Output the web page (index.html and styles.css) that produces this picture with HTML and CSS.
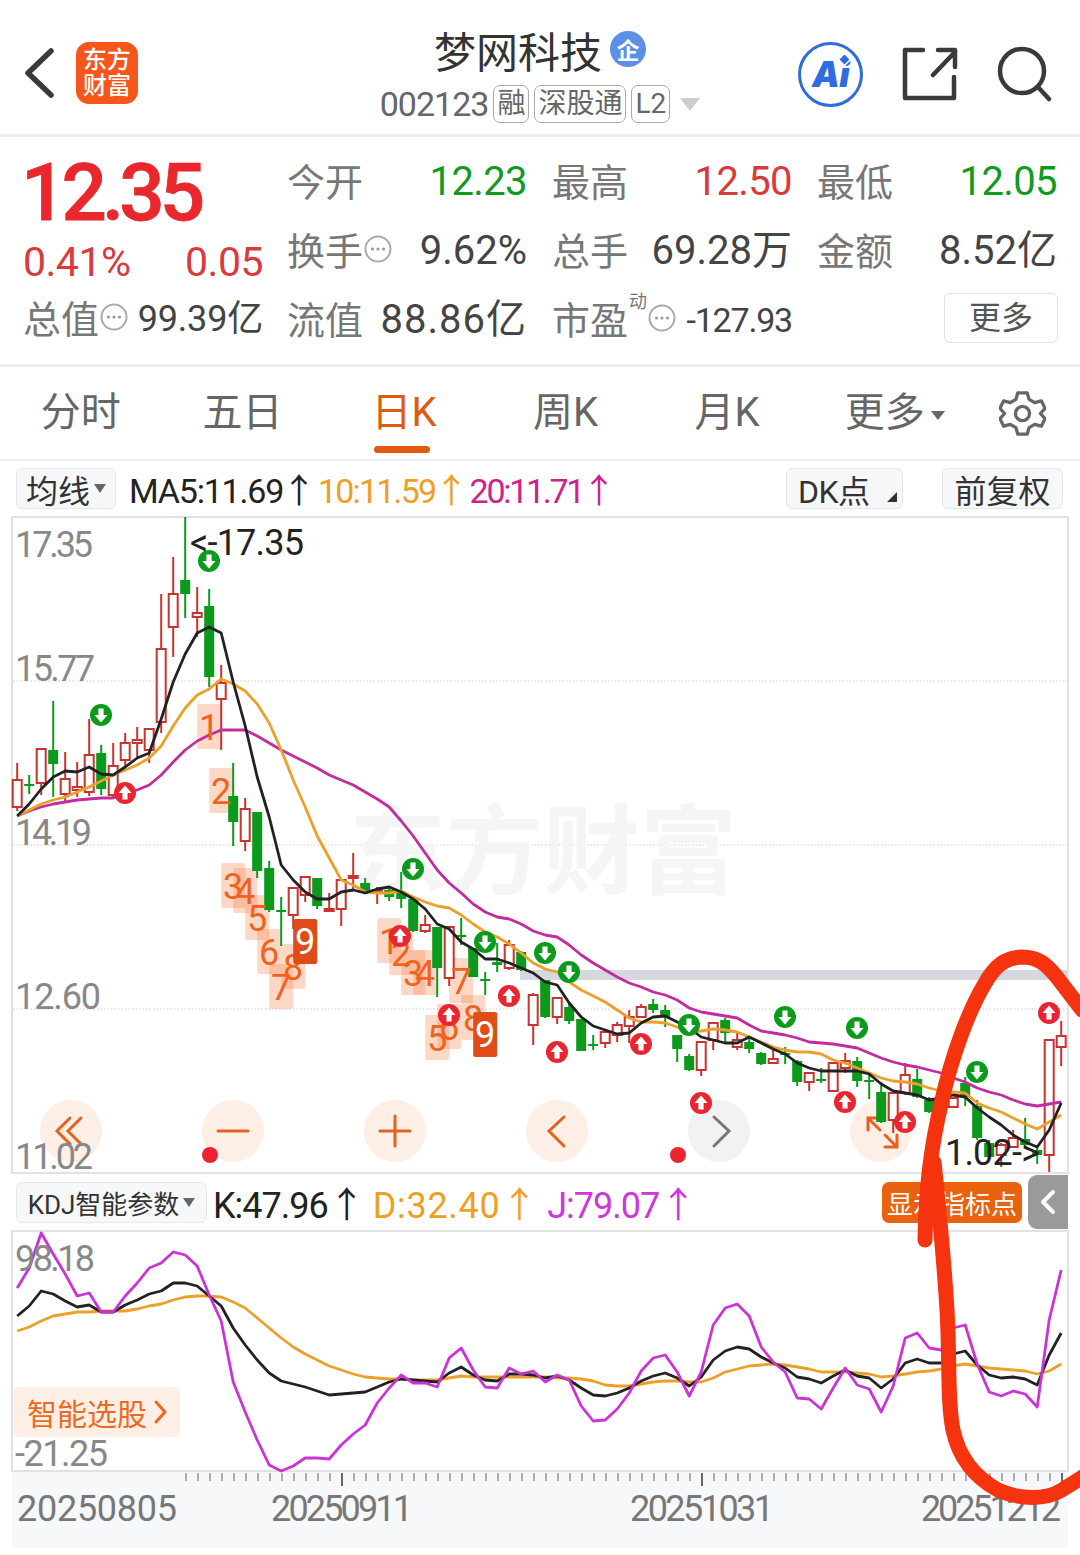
FILE: index.html
```html
<!DOCTYPE html>
<html lang="zh-CN">
<head>
    <meta charset="UTF-8">
    <meta name="viewport" content="width=device-width, initial-scale=1.0">
    <title>梦网科技 002123</title>
    <link rel="stylesheet" href="styles.css">
</head>
<body>
    <svg class="defs" width="0" height="0">
        <symbol id="dots" viewBox="0 0 28 28">
            <circle cx="14" cy="14" r="12.5" fill="none" stroke="#aaa" stroke-width="2"/>
            <circle cx="8.5" cy="14" r="1.6" fill="#999"/>
            <circle cx="14" cy="14" r="1.6" fill="#999"/>
            <circle cx="19.5" cy="14" r="1.6" fill="#999"/>
        </symbol>
    </svg>
    <div class="page">
        <header class="topbar">
            <div class="topbar-left">
                <svg class="back" width="32" height="50" viewBox="0 0 32 50"><path d="M28 3 L5 25 L28 47" fill="none" stroke="#3a3a3a" stroke-width="5.5" stroke-linecap="round" stroke-linejoin="round"/></svg>
                <div class="logo"><span>东方</span><span>财富</span></div>
            </div>
            <div class="topbar-mid">
                <div class="title-row">
                    <span class="title">梦网科技</span>
                    <span class="ent">企</span>
                </div>
                <div class="code-row">
                    <span class="code">002123</span>
                    <span class="tag">融</span>
                    <span class="tag">深股通</span>
                    <span class="tag">L2</span>
                    <span class="caret"></span>
                </div>
            </div>
            <div class="topbar-right">
                <div class="ai">
                    <span>Ai</span>
                    <i class="ai-star"></i>
                </div>
                <svg width="56" height="54" viewBox="0 0 56 54"><path d="M21 3 H3 V51 H52 V30 M31 28 L53 5 M36 3 H53 V20" fill="none" stroke="#3a3a3a" stroke-width="4.5" stroke-linejoin="round" stroke-linecap="round"/></svg>
                <svg width="56" height="56" viewBox="0 0 56 56"><circle cx="25" cy="25" r="22" fill="none" stroke="#3a3a3a" stroke-width="4.5"/><path d="M41 41 L52 53" stroke="#3a3a3a" stroke-width="4.5" stroke-linecap="round"/></svg>
            </div>
        </header>

        <section class="quote">
            <div class="quote-left">
                <div class="price">12.35</div>
                <div class="change"><span>0.41%</span><span>0.05</span></div>
                <div class="stat"><span class="label">总值<svg class="info"><use href="#dots"/></svg></span><span class="val mini">99.39亿</span></div>
            </div>
            <div class="quote-grid">
                <div class="stat"><span class="label">今开</span><span class="val tight green">12.23</span></div>
                <div class="stat"><span class="label">最高</span><span class="val tight red">12.50</span></div>
                <div class="stat"><span class="label">最低</span><span class="val tight green">12.05</span></div>
                <div class="stat"><span class="label">换手<svg class="info"><use href="#dots"/></svg></span><span class="val">9.62%</span></div>
                <div class="stat"><span class="label">总手</span><span class="val">69.28万</span></div>
                <div class="stat"><span class="label">金额</span><span class="val">8.52亿</span></div>
                <div class="stat"><span class="label">流值</span><span class="val wide">88.86亿</span></div>
                <div class="stat"><span class="label">市盈<sup>动</sup><svg class="info"><use href="#dots"/></svg></span><span class="val small">-127.93</span></div>
                <div class="stat end"><button class="more">更多</button></div>
            </div>
        </section>

        <nav class="tabs">
            <a class="tab">分时</a>
            <a class="tab">五日</a>
            <a class="tab active">日K</a>
            <a class="tab">周K</a>
            <a class="tab">月K</a>
            <a class="tab tab-more">更多<i class="tab-caret"></i></a>
            <div class="gear">
                <svg width="47" height="47" viewBox="0 0 50 50"><path d="M20 3 H30 L32 10 L38 13.5 L45 11.5 L49 19.5 L44 25 L49 30.5 L45 38.5 L38 36.5 L32 40 L30 47 H20 L18 40 L12 36.5 L5 38.5 L1 30.5 L6 25 L1 19.5 L5 11.5 L12 13.5 L18 10 Z" fill="none" stroke="#666" stroke-width="3.5" stroke-linejoin="round"/><circle cx="25" cy="25" r="7.5" fill="none" stroke="#666" stroke-width="3.5"/></svg>
            </div>
        </nav>

        <div class="legend">
            <button class="pill pill-ma">均线<i class="pill-caret"></i></button>
            <span class="ma black">MA5:11.69<b>↑</b></span>
            <span class="ma orange">10:11.59<b>↑</b></span>
            <span class="ma pink">20:11.71<b>↑</b></span>
            <button class="pill pill-dk">DK点<i class="corner"></i></button>
            <button class="pill pill-fq">前复权</button>
        </div>

        <div class="chart chart-main"><svg id="mainChart" width="1054" height="654" viewBox="13 518 1054 654"></svg></div>

        <div class="legend legend-kdj">
            <button class="pill pill-kdj">KDJ智能参数<i class="pill-caret"></i></button>
            <span class="ma kdj black">K:47.96<b>↑</b></span>
            <span class="ma kdj orange">D:32.40<b>↑</b></span>
            <span class="ma kdj violet">J:79.07<b>↑</b></span>
            <button class="show-points">显示指标点</button>
            <button class="side-tab"><svg width="16" height="26" viewBox="0 0 16 26"><path d="M13 3 L3 13 L13 23" fill="none" stroke="#fff" stroke-width="4" stroke-linecap="round" stroke-linejoin="round"/></svg></button>
        </div>

        <div class="chart chart-kdj">
            <svg id="kdjChart" width="1054" height="238" viewBox="13 1232 1054 238"></svg>
            <div class="picker">智能选股<svg width="15" height="26" viewBox="0 0 15 26"><path d="M3 3 L12 13 L3 23" fill="none" stroke="#ea6a20" stroke-width="3" stroke-linecap="round" stroke-linejoin="round"/></svg></div>
        </div>

        <div class="axis"><svg id="axis" width="1056" height="76" viewBox="12 1472 1056 76"></svg></div>

        <!-- red marker the screenshot's owner drew over the chart -->
        <svg class="scribble" width="1080" height="1555" viewBox="0 0 1080 1555">
            <path d="M925 1240 C926 1190 930 1150 942 1100 C952 1056 968 1012 984 985 C995 965 1005 958 1022 957 C1038 957 1046 964 1056 976 L1082 1010" />
            <path d="M934 1162 C938 1200 944 1260 947 1310 C950 1360 947 1400 953 1430 C959 1458 976 1478 998 1490 C1020 1500 1046 1500 1062 1490 L1084 1476" />
        </svg>
    </div>
    <script src="chart.js"></script>
</body>
</html>
```

FILE: styles.css
```css
* {
    box-sizing: border-box;
}
body {
    margin: 0;
    background: #fff;
    font-family: Roboto, "Noto Sans CJK SC", sans-serif;
    color: #444;
}
button {
    font-family: inherit;
    cursor: pointer;
}
.defs {
    display: block;
    height: 0;
}
.page {
    position: relative;
    width: 1080px;
    height: 1555px;
    overflow: hidden;
}

/* top bar */
.topbar {
    display: grid;
    grid-template-columns: 300px 480px 300px;
    height: 137px;
    border-bottom: 3px solid #eee;
}
.topbar-left {
    display: flex;
    align-items: center;
    gap: 21px;
    padding: 12px 0 0 23px;
    height: 134px;
    align-self: start;
}
.logo {
    display: flex;
    flex-direction: column;
    align-items: center;
    justify-content: center;
    width: 62px;
    height: 62px;
    border-radius: 13px;
    background: #f6561a;
    color: #fff;
    font-size: 24px;
    line-height: 26px;
    font-weight: 500;
}
.topbar-mid {
    display: flex;
    flex-direction: column;
    align-items: center;
    padding-top: 23px;
}
.title-row {
    display: flex;
    align-items: center;
    gap: 8px;
    height: 52px;
}
.title {
    font-size: 42px;
    color: #333;
}
.ent {
    display: flex;
    align-items: center;
    justify-content: center;
    width: 36px;
    height: 36px;
    border-radius: 50%;
    background: #5b90e6;
    color: #fff;
    font-size: 23px;
    font-weight: 700;
}
.code-row {
    display: flex;
    align-items: center;
    gap: 5px;
    height: 40px;
    margin-top: 9px;
}
.code {
    font-size: 34px;
    color: #666;
    letter-spacing: -1px;
}
.tag {
    padding: 0 3px;
    border: 1.5px solid #aaa;
    border-radius: 7px;
    font-size: 28px;
    line-height: 36px;
    color: #666;
}
.caret {
    width: 0;
    height: 0;
    margin-left: 5px;
    border: 10px solid transparent;
    border-top: 13px solid #ccc;
    border-bottom: 0;
}
.topbar-right {
    display: flex;
    align-items: center;
    justify-content: flex-end;
    gap: 39px;
    padding: 14px 27px 0 0;
    height: 134px;
}
.ai {
    position: relative;
    display: flex;
    align-items: center;
    justify-content: center;
    width: 65px;
    height: 65px;
    border: 3.5px solid #2f6ce0;
    border-radius: 50%;
    color: #2f6ce0;
    font-family: Inter, Roboto, sans-serif;
    font-size: 35px;
    font-weight: 900;
    font-style: italic;
    letter-spacing: -0.5px;
}
.ai-star {
    position: absolute;
    top: 11px;
    right: 12px;
    width: 7px;
    height: 7px;
    background: #2f6ce0;
    box-shadow: 0 0 0 1.5px #fff;
    transform: rotate(45deg);
}

/* quote block */
.quote {
    display: flex;
    height: 230px;
    padding: 10px 23px 0;
    border-bottom: 3px solid #eee;
}
.quote-left {
    width: 241px;
    margin-right: 24px;
}
.price {
    height: 90px;
    margin-left: -2px;
    font-size: 80px;
    line-height: 92px;
    font-weight: 500;
    color: #e8282d;
    letter-spacing: -5px;
    -webkit-text-stroke: 0.8px #e8282d;
}
.change {
    display: flex;
    justify-content: space-between;
    height: 50px;
    font-size: 41px;
    line-height: 50px;
    color: #d93a3a;
    letter-spacing: -0.5px;
}
.quote-left .stat {
    height: 69px;
    margin-top: -3px;
}
.quote-grid {
    display: grid;
    grid-template-columns: repeat(3, 240px);
    grid-auto-rows: 69px;
    column-gap: 25px;
}
.stat {
    display: flex;
    align-items: center;
    justify-content: space-between;
}
.stat.end {
    justify-content: flex-end;
}
.label {
    display: flex;
    align-items: center;
    padding-bottom: 4px;
    font-size: 38px;
    color: #777;
}
.label sup {
    align-self: flex-start;
    margin-top: 2px;
    font-size: 18px;
    line-height: 20px;
    margin-left: 1px;
}
.info {
    width: 28px;
    height: 28px;
    margin-left: 1px;
}
.val {
    font-size: 40px;
    line-height: 46px;
    color: #444;
    white-space: nowrap;
}
.val.tight {
    letter-spacing: -0.6px;
}
.val.wide {
    letter-spacing: 1px;
}
.val.mini {
    font-size: 36px;
    letter-spacing: -0.2px;
}
.val.small {
    font-size: 34px;
    letter-spacing: -1.2px;
}
.val.green {
    color: #109a1e;
}
.val.red {
    color: #d93a3a;
}
.more {
    width: 114px;
    height: 50px;
    margin: 0 -1px 4px 0;
    border: 1.5px solid #e2e2e2;
    border-radius: 6px;
    background: #fff;
    color: #555;
    font-size: 32px;
    line-height: 44px;
}

/* period tabs */
.tabs {
    display: flex;
    height: 94px;
    border-bottom: 2px solid #eee;
}
.tab {
    position: relative;
    width: 161.6px;
    text-align: center;
    font-size: 40px;
    line-height: 92px;
    color: #666;
}
.tab.active {
    color: #e05a10;
}
.tab.active::after {
    content: "";
    position: absolute;
    left: 51px;
    bottom: 6px;
    width: 56px;
    height: 7px;
    border-radius: 4px;
    background: #e05a10;
}
.tab-more {
    padding-left: 12px;
    white-space: nowrap;
}
.tab-caret {
    display: inline-block;
    width: 0;
    height: 0;
    margin-left: 6px;
    vertical-align: 6px;
    border: 7px solid transparent;
    border-top: 9px solid #666;
    border-bottom: 0;
}
.gear {
    display: flex;
    align-items: center;
    justify-content: center;
    width: 106px;
}

/* legend rows */
.legend {
    display: flex;
    align-items: center;
    height: 55px;
    padding-left: 16px;
}
.pill {
    display: flex;
    align-items: center;
    justify-content: center;
    height: 41px;
    padding: 0;
    border: 1.5px solid #e6e8ec;
    border-radius: 6px;
    background: #f6f7f9;
    color: #333;
    font-size: 32px;
}
.pill-ma {
    width: 100px;
    margin-right: 13px;
}
.pill-dk {
    position: relative;
    width: 117px;
    margin-left: auto;
    margin-right: 39px;
    letter-spacing: -0.5px;
    justify-content: flex-start;
    padding-left: 11px;
}
.pill-fq {
    width: 121px;
    margin-right: 17px;
}
.pill-kdj {
    width: 191px;
    margin-right: 6px;
    font-size: 26px;
}
.pill-caret {
    width: 0;
    height: 0;
    margin-left: 4px;
    border: 6px solid transparent;
    border-top: 9px solid #666;
    border-bottom: 0;
}
.corner {
    position: absolute;
    right: 5px;
    bottom: 6px;
    width: 0;
    height: 0;
    border-left: 10px solid transparent;
    border-bottom: 10px solid #333;
}
.ma {
    margin-right: 3px;
    font-size: 34px;
    letter-spacing: -1.2px;
    white-space: nowrap;
}
.ma b {
    font-weight: 400;
    margin-left: -1px;
}
.ma.orange {
    letter-spacing: -1.8px;
}
.ma.pink {
    letter-spacing: -2.3px;
}
.ma.kdj {
    font-size: 36px;
    margin-right: 9px;
    letter-spacing: -1px;
}
.ma.kdj.orange {
    letter-spacing: 0.7px;
}
.ma.kdj b {
    margin-left: 1px;
}
.black {
    color: #222;
}
.orange {
    color: #ee9f24;
}
.pink {
    color: #d1208c;
}
.violet {
    color: #cf36e0;
}
.legend-kdj {
    position: relative;
    height: 56px;
}
.show-points {
    width: 140px;
    height: 41px;
    margin-left: auto;
    margin-right: 6px;
    padding: 0;
    border: 0;
    border-radius: 7px;
    background: #e8620f;
    color: #fff;
    font-size: 26px;
    white-space: nowrap;
}
.side-tab {
    display: flex;
    align-items: center;
    justify-content: center;
    width: 40px;
    height: 54px;
    margin-right: 12px;
    padding: 0;
    border: 0;
    border-radius: 9px 0 0 9px;
    background: #9a9a9a;
}

/* charts */
.chart {
    position: relative;
    margin: 0 11px;
    border: 2px solid #e2e2e2;
}
.chart svg {
    display: block;
    overflow: visible;
}
.chart-main {
    height: 658px;
}
.chart-kdj {
    height: 242px;
}
.picker {
    position: absolute;
    left: 0;
    top: 155px;
    display: flex;
    align-items: center;
    gap: 6px;
    width: 167px;
    height: 50px;
    padding-left: 14px;
    border-radius: 6px;
    background: #fdeee6;
    color: #ea6a20;
    font-size: 30px;
}
.axis {
    height: 76px;
    margin: 0 12px;
    background: #f7f8fa;
}
.axis svg {
    display: block;
    overflow: visible;
}
.scribble {
    position: absolute;
    top: 0;
    left: 0;
}
.scribble path {
    fill: none;
    stroke: #f5330f;
    stroke-width: 15;
    stroke-linecap: round;
    stroke-linejoin: round;
}

/* chart drawing */
.axis-label {
    font-size: 36px;
    fill: #888;
}
.extreme {
    font-size: 36px;
    fill: #222;
    letter-spacing: -0.8px;
}
.axis-date {
    font-size: 36px;
    fill: #777;
}
.watermark {
    font-size: 97px;
    font-weight: 700;
    fill: #f5f5f6;
    font-family: "Noto Sans CJK SC", sans-serif;
}
.seq {
    font-size: 36px;
    fill: #ec6420;
    text-anchor: middle;
}
.seq.last {
    fill: #fff;
}
```

FILE: chart.js
```js
// candles: [dir, wickTop, bodyTop, bodyBottom, wickBottom], dir 1 = up (red, hollow)
const candles = [
    [1,763,780,807,811],[0,775,784,785,794],[1,749,749,783,795],[0,701,750,764,797],
    [1,752,779,794,802],[1,762,787,790,797],[1,719,755,792,796],[0,745,753,789,795],
    [1,743,766,795,799],[1,733,743,760,767],[1,727,740,743,757],[1,729,729,750,763],
    [1,594,649,722,733],[1,557,594,627,657],[0,517,580,594,618],[1,587,613,617,637],
    [0,589,606,677,687],[1,665,683,699,750],[0,763,796,822,846],[1,798,809,841,851],
    [0,812,812,871,878],[0,861,868,910,912],[0,897,910,912,946],[1,888,888,915,929],
    [1,877,877,895,902],[0,878,878,906,909],[1,893,909,910,911],[1,880,880,909,926],
    [1,853,876,878,890],[0,878,883,892,893],[1,887,890,891,904],[0,887,890,897,901],
    [0,872,892,899,908],[0,897,899,931,932],[1,915,925,931,933],[0,927,927,968,997],
    [1,927,927,978,986],[0,918,935,937,945],[0,948,948,977,977],[0,972,979,981,995],
    [0,943,962,965,972],[1,940,945,968,970],[0,951,952,970,971],[1,993,995,1025,1045],
    [0,980,980,1017,1018],[1,997,998,1017,1024],[0,1002,1007,1021,1024],[0,1019,1019,1051,1051],
    [0,1035,1044,1045,1050],[1,1030,1032,1043,1048],[1,1022,1025,1035,1042],[1,1010,1017,1026,1043],
    [1,1004,1007,1017,1018],[0,999,1004,1010,1013],[0,1005,1010,1017,1027],[0,1035,1035,1049,1062],
    [0,1054,1056,1070,1071],[1,1042,1042,1070,1076],[1,1022,1023,1040,1050],[0,1018,1020,1033,1042],
    [1,1032,1040,1047,1050],[0,1039,1042,1049,1053],[0,1052,1053,1064,1065],[1,1048,1059,1063,1064],
    [0,1047,1053,1055,1064],[0,1060,1061,1082,1086],[1,1073,1073,1082,1091],[0,1068,1079,1081,1083],
    [1,1063,1063,1091,1092],[1,1053,1061,1068,1073],[0,1057,1061,1081,1087],[0,1075,1080,1082,1099],
    [0,1082,1092,1122,1123],[1,1093,1093,1120,1133],[1,1063,1075,1093,1095],[0,1069,1079,1097,1098],
    [0,1097,1100,1112,1113],[1,1103,1107,1113,1117],[1,1097,1098,1107,1108],[0,1077,1083,1097,1106],
    [0,1100,1106,1138,1140],[0,1140,1143,1157,1158],[1,1143,1145,1155,1167],[1,1130,1138,1147,1148],
    [0,1118,1139,1145,1148],[0,1148,1150,1155,1164],[1,1040,1040,1155,1172],[1,1021,1036,1047,1066]
];

// x of each candle is fixed, so the averages only list y
const ma5 = [816,804,789,777,771,772,767,774,775,767,758,753,719,682,654,633,627,633,682,726,777,817,865,880,892,899,899,892,890,893,889,887,892,899,909,924,929,942,949,959,959,963,968,973,
    982,985,1003,1017,1026,1030,1034,1033,1023,1017,1016,1022,1028,1037,1040,1043,1043,1037,1043,1049,1054,1063,1068,1071,1071,1071,1071,1074,1084,1091,1093,1095,1100,1098,1095,1097,1108,1117,1125,1135,1142,1147,1130,1103];
const ma10 = [816,810,804,800,797,792,787,781,775,770,765,758,746,726,708,695,689,679,684,691,704,723,750,780,807,836,858,880,885,892,893,893,891,897,902,906,908,915,924,932,937,944,953,963,
    969,972,982,990,996,1002,1010,1018,1022,1022,1023,1027,1032,1031,1029,1030,1032,1037,1042,1047,1050,1052,1052,1054,1060,1063,1068,1073,1078,1081,1082,1084,1088,1091,1092,1093,1103,1108,1112,1118,1124,1129,1122,1115];
const ma20 = [816,811,807,804,802,800,799,798,798,794,790,785,775,762,750,741,735,730,730,730,736,743,750,756,762,768,775,780,785,792,799,807,821,836,853,870,883,893,904,912,917,919,924,931,
    935,937,945,955,963,970,977,983,987,992,995,1000,1008,1012,1014,1016,1018,1025,1031,1033,1035,1038,1042,1043,1044,1046,1048,1053,1058,1062,1065,1067,1070,1073,1078,1082,1088,1092,1095,1100,1104,1106,1104,1102];

const kdjJ = [1288,1268,1233,1254,1274,1296,1293,1312,1312,1296,1283,1268,1263,1252,1255,1266,1295,1321,1382,1412,1440,1465,1471,1466,1458,1458,1459,1445,1434,1425,1403,1388,1375,1383,1383,1387,1358,1348,1370,1387,1388,1368,1374,1371,
    1382,1375,1380,1406,1421,1420,1409,1393,1371,1358,1355,1372,1396,1372,1325,1308,1304,1316,1347,1362,1372,1398,1399,1409,1388,1368,1385,1389,1412,1386,1338,1333,1348,1350,1328,1325,1364,1392,1396,1391,1394,1407,1320,1270];
const kdjK = [1316,1306,1291,1294,1301,1307,1305,1312,1312,1305,1300,1294,1291,1283,1283,1286,1296,1306,1328,1345,1360,1373,1381,1384,1387,1391,1395,1394,1393,1392,1387,1382,1379,1380,1381,1382,1373,1367,1375,1380,1381,1374,1374,1375,
    1378,1376,1380,1388,1395,1396,1393,1388,1381,1376,1373,1378,1386,1377,1360,1351,1347,1349,1357,1363,1368,1377,1379,1383,1376,1370,1376,1378,1388,1379,1363,1359,1363,1363,1354,1351,1365,1375,1378,1377,1379,1385,1355,1333];
const kdjD = [1331,1327,1321,1316,1314,1312,1312,1311,1311,1311,1309,1306,1304,1300,1297,1296,1296,1297,1302,1308,1318,1328,1338,1347,1354,1360,1366,1370,1374,1377,1378,1379,1379,1380,1380,1380,1378,1376,1377,1377,1377,1377,1377,1377,
    1377,1378,1378,1379,1381,1385,1386,1386,1384,1382,1381,1381,1382,1382,1378,1372,1369,1366,1365,1364,1365,1367,1369,1372,1372,1372,1373,1374,1377,1376,1374,1372,1371,1369,1366,1364,1366,1368,1369,1370,1371,1374,1371,1364];

// [x, y, kind], kind up = red, down = green
const markers = [
    [101,715,'down'],[209,561,'down'],[413,869,'down'],[485,942,'down'],[125,793,'up'],[400,936,'up'],
    [509,996,'up'],[449,1015,'up'],[545,953,'down'],[569,972,'down'],[689,1025,'down'],[785,1017,'down'],
    [857,1028,'down'],[977,1072,'down'],[557,1052,'up'],[641,1044,'up'],[701,1103,'up'],[845,1102,'up'],
    [905,1122,'up'],[1049,1013,'up']
];

// nine-count boxes: [candle index, box top, digit]
const counts = [
    [16,704,1],[17,768,2],[18,863,3],[19,868,4],[20,895,5],[21,929,6],[22,964,7],[23,944,8],[24,919,9],
    [31,918,1],[32,930,2],[33,950,3],[34,950,4],[35,1015,5],[36,1004,6],[37,958,7],[38,995,8],[39,1012,9]
];

// price labels and dates: [text, x, y, width], the widths keep the narrow ones of the app's font
const priceLabels = [['17.35',15,557,78],['15.77',15,681,80],['14.19',15,845,77],['12.60',15,1009,86],['11.02',15,1169,78]];
const kdjLabels = [['98.18',15,1271,80],['-21.25',15,1466,93]];
const dates = [['20250805',17,1521,160],['20250911',271,1521,142],['20251031',630,1521,144],['20251212',921,1521,140]];

const candleX = i => 17.2 + 12 * i;
const points = ys => ys.map((y, i) => candleX(i).toFixed(1) + ',' + y).join(' ');
const line = (ys, color) => `<polyline points="${points(ys)}" fill="none" stroke="${color}" stroke-width="2.8" stroke-linejoin="round"/>`;
const label = (cls, t) => `<text class="${cls}" x="${t[1]}" y="${t[2]}" textLength="${t[3]}">${t[0]}</text>`;

function drawCandle(c, i) {
    const x = candleX(i);
    const color = c[0] ? '#c9332f' : '#0c9a1c';
    let s = `<path d="M${x} ${c[1]}V${c[4]}" stroke="${color}" stroke-width="2"/>`;
    const h = Math.max(c[3] - c[2], 2);
    if (c[0]) {
        s += `<rect x="${x - 4.5}" y="${c[2]}" width="9" height="${h}" fill="#fff" stroke="${color}" stroke-width="2"/>`;
    } else {
        s += `<rect x="${x - 5}" y="${c[2]}" width="10" height="${h}" fill="${color}"/>`;
    }
    return s;
}

function drawMarker(m) {
    const up = m[2] === 'up';
    const arrow = up ? 'M0 -7.5L6.5 0H2.6V6.5H-2.6V0H-6.5Z' : 'M0 7.5L6.5 0H2.6V-6.5H-2.6V0H-6.5Z';
    return `<g transform="translate(${m[0]} ${m[1]})"><circle r="11" fill="${up ? '#ea2530' : '#0c9a1c'}"/><path d="${arrow}" fill="#fff"/></g>`;
}

function drawCountBox(b) {
    const x = candleX(b[0]);
    if (b[2] === 9) return '';
    return `<rect x="${x - 12}" y="${b[1]}" width="24" height="45" rx="2" fill="#f98a55" fill-opacity="0.33"/>`;
}

function drawCountDigit(b) {
    const x = candleX(b[0]);
    if (b[2] === 9) {
        return `<rect x="${x - 12}" y="${b[1]}" width="24" height="45" rx="2" fill="#e04c17"/><text class="seq last" x="${x}" y="${b[1] + 35}">9</text>`;
    }
    return `<text class="seq" x="${x}" y="${b[1] + 36}">${b[2]}</text>`;
}

function gridLine(y) {
    return `<path d="M13 ${y}H1067" stroke="#ddd" stroke-width="1.5" stroke-dasharray="1.5 2"/>`;
}

function roundButtons() {
    const icon = 'fill="none" stroke="#e2621f" stroke-width="3" stroke-linecap="round"';
    const fill = '#fdeee6';
    return [71, 233, 395, 557, 881].map(x => `<circle cx="${x}" cy="1131" r="31" fill="${fill}"/>`).join('')
        + '<circle cx="719" cy="1131" r="31" fill="#f2f2f2"/>'
        + `<path d="M70 1118L57 1131L70 1144M81 1118L68 1131L81 1144" ${icon}/>`
        + `<path d="M218 1131H248" ${icon}/>`
        + `<path d="M380 1131H410M395 1116V1146" ${icon}/>`
        + `<path d="M564 1117L549 1131L564 1146" ${icon}/>`
        + `<path d="M714 1117L729 1131L714 1146" fill="none" stroke="#777" stroke-width="3" stroke-linecap="round"/>`
        + `<path d="M868 1130V1118H880M868 1118L880 1130M885 1135L897 1147M885 1147H897V1135" ${icon}/>`;
}

const main = document.getElementById('mainChart');
main.innerHTML =
    [681, 845, 1009].map(gridLine).join('')
    + '<text class="watermark" x="349" y="886">东方财富</text>'
    + '<rect x="520" y="970" width="547" height="10" fill="#d5d8de"/>'
    + roundButtons()
    + counts.map(drawCountBox).join('')
    + candles.map(drawCandle).join('')
    + line(ma20, '#c22c9f') + line(ma10, '#eba02a') + line(ma5, '#222')
    + counts.map(drawCountDigit).join('')
    + markers.map(drawMarker).join('')
    + '<circle cx="210" cy="1155" r="8" fill="#ea2530"/><circle cx="678" cy="1155" r="8" fill="#ea2530"/>'
    + priceLabels.map(t => label('axis-label', t)).join('')
    + '<text class="extreme" x="190" y="555">&lt;-17.35</text>'
    + '<text class="extreme" x="945" y="1165">1.02-&gt;</text>';

const kdj = document.getElementById('kdjChart');
kdj.innerHTML =
    line(kdjD, '#eba02a') + line(kdjK, '#222') + line(kdjJ, '#cc33d6')
    + kdjLabels.map(t => label('axis-label', t)).join('');

let ticks = '';
for (let x = 186; x <= 1062; x += 12) {
    const major = x === 342 || x === 702 || x === 1062;
    ticks += `<path d="M${x} 1473V${major ? 1486 : 1481}" stroke="${major ? '#666' : '#999'}" stroke-width="${major ? 2 : 1.5}"/>`;
}
document.getElementById('axis').innerHTML = ticks + dates.map(t => label('axis-date', t)).join('');
```
